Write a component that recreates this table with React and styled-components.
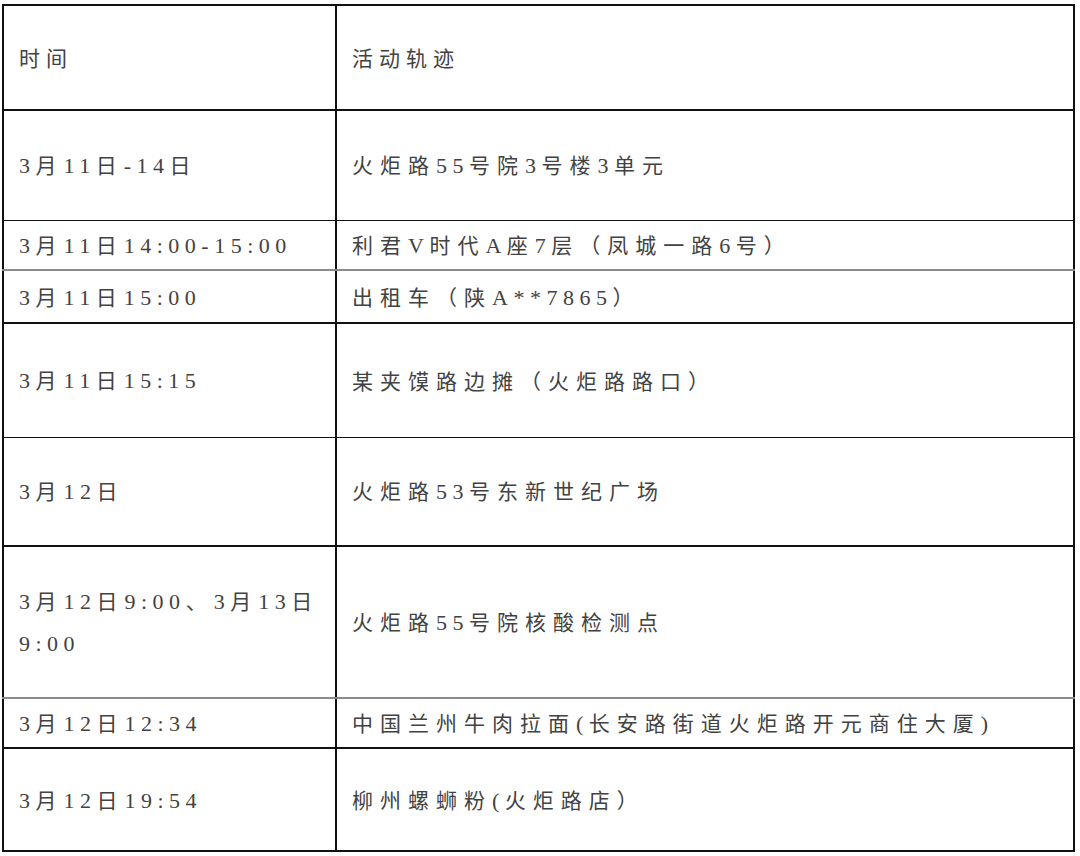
import React from "react";
import styled, { createGlobalStyle } from "styled-components";

const GlobalStyle = createGlobalStyle`
  html, body {
    margin: 0;
    padding: 0;
    background: #ffffff;
  }
`;

// each row: time column, trace column, row height and the kind of line under it
const rows = [
  { time: "3月11日-14日", place: "火炬路55号院3号楼3单元", h: 110, line: "thin" },
  { time: "3月11日14:00-15:00", place: "利君V时代A座7层（凤城一路6号）", h: 50, line: "gray" },
  { time: "3月11日15:00", place: "出租车（陕A**7865）", h: 53, line: "thick" },
  { time: "3月11日15:15", place: "某夹馍路边摊（火炬路路口）", h: 114, line: "thin" },
  { time: "3月12日", place: "火炬路53号东新世纪广场", h: 109, line: "thick" },
  { time: "3月12日9:00、3月13日9:00", place: "火炬路55号院核酸检测点", h: 152, line: "gray" },
  { time: "3月12日12:34", place: "中国兰州牛肉拉面(长安路街道火炬路开元商住大厦)", h: 50, line: "thick" },
  { time: "3月12日19:54", place: "柳州螺蛳粉(火炬路店）", h: 103, line: "thick" },
];

const lines = {
  thick: "2.5px solid #111",
  thin: "1.5px solid #111",
  gray: "2px solid #8a8a8a",
};

// wrap digit / latin runs so they get the narrow serif look
const withNums = (text) =>
  text.split(/([0-9A-Za-z:*()\-]+)/).map((part, i) =>
    /^[0-9A-Za-z:*()\-]+$/.test(part) ? <Num key={i}>{part}</Num> : part
  );

const App = () => {
  return (
    <Page>
      <GlobalStyle />
      <Table>
        <colgroup>
          <col style={{ width: 333 }} />
          <col />
        </colgroup>
        <tbody>
          <Row>
            <Cell $h={105} $line="thick">
              <Text $head>时间</Text>
            </Cell>
            <Cell $h={105} $line="thick">
              <Text $head>活动轨迹</Text>
            </Cell>
          </Row>
          {rows.map((r) => (
            <Row key={r.time}>
              <Cell $h={r.h} $line={r.line}>
                <Text $narrow>{withNums(r.time)}</Text>
              </Cell>
              <Cell $h={r.h} $line={r.line}>
                <Text>{withNums(r.place)}</Text>
              </Cell>
            </Row>
          ))}
        </tbody>
      </Table>
    </Page>
  );
};

const Page = styled.div`
  padding: 4px 0 0 2px;
`;

const Table = styled.table`
  border-collapse: collapse;
  table-layout: fixed;
  width: 1073px;
  border-top: 2.5px solid #111;
  border-left: 2px solid #111;
  border-right: 2px solid #111;
`;

const Row = styled.tr``;

const Cell = styled.td`
  height: ${(p) => p.$h}px;
  padding: 0 6px 0 15px;
  vertical-align: middle;
  border-bottom: ${(p) => lines[p.$line]};
  border-right: 2px solid #111;
  box-sizing: border-box;
`;

const Text = styled.div`
  font-family: "Noto Sans CJK SC", "Liberation Serif", sans-serif;
  font-size: 21px;
  letter-spacing: ${(p) => (p.$head ? "6px" : "7px")};
  line-height: 41px;
  color: #424242;
  max-width: ${(p) => (p.$narrow ? "310px" : "none")};
`;

const Num = styled.span`
  font-family: "Liberation Serif", serif;
  font-size: 22px;
  letter-spacing: 5.5px;
`;

export default App;
